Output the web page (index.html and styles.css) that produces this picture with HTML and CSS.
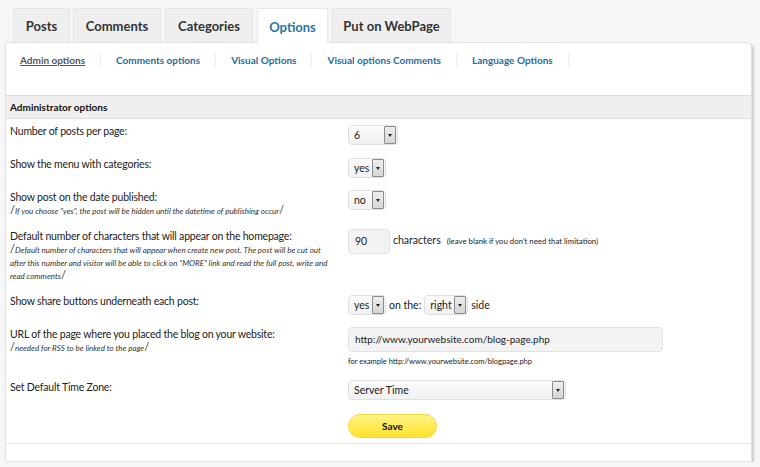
FILE: index.html
```html
<!DOCTYPE html>
<html>
<head>
<meta charset="utf-8">
<link rel="stylesheet" href="styles.css">
</head>
<body>
<div class="wrap">
  <div class="tabs">
    <div class="tab t-posts">Posts</div>
    <div class="tab t-comments">Comments</div>
    <div class="tab t-cats">Categories</div>
    <div class="tab t-opts active">Options</div>
    <div class="tab t-put">Put on WebPage</div>
  </div>
  <div class="panel">
    <div class="subnav">
      <a class="sub current">Admin options</a>
      <a class="sub">Comments options</a>
      <a class="sub">Visual Options</a>
      <a class="sub">Visual options Comments</a>
      <a class="sub">Language Options</a>
    </div>
    <div class="section-head">Administrator options</div>
    <div class="rows">
      <div class="row">
        <div class="label"><div class="ltext">Number of posts per page:</div></div>
        <div class="ctrl"><div class="select w50"><span class="val">6</span><span class="arrow"></span></div></div>
      </div>
      <div class="row">
        <div class="label"><div class="ltext">Show the menu with categories:</div></div>
        <div class="ctrl"><div class="select w38"><span class="val">yes</span><span class="arrow"></span></div></div>
      </div>
      <div class="row tall">
        <div class="label">
          <div class="ltext">Show post on the date published:</div>
          <div class="note"><span class="slash">/</span>If you choose "yes", the post will be hidden until the datetime of publishing occur<span class="slash">/</span></div>
        </div>
        <div class="ctrl c1"><div class="select w38"><span class="val">no</span><span class="arrow"></span></div></div>
      </div>
      <div class="row tall">
        <div class="label">
          <div class="ltext">Default number of characters that will appear on the homepage:</div>
          <div class="note long"><span class="slash">/</span>Default number of characters that will appear when create new post. The post will be cut out after this number and visitor will be able to click on "MORE" link and read the full post, write and read comments<span class="slash">/</span></div>
        </div>
        <div class="ctrl c1 inline">
          <div class="input w42">90</div>
          <span class="after">characters</span>
          <span class="tiny">(leave blank if you don't need that limitation)</span>
        </div>
      </div>
      <div class="row">
        <div class="label"><div class="ltext">Show share buttons underneath each post:</div></div>
        <div class="ctrl inline">
          <div class="select w38"><span class="val">yes</span><span class="arrow"></span></div>
          <span class="mid">on the:</span>
          <div class="select w44"><span class="val">right</span><span class="arrow"></span></div>
          <span class="mid">side</span>
        </div>
      </div>
      <div class="row">
        <div class="label">
          <div class="ltext">URL of the page where you placed the blog on your website:</div>
          <div class="note">
            <span class="slash">/</span>needed for RSS to be linked to the page<span class="slash">/</span></div>
        </div>
        <div class="ctrl c1">
          <div class="input w315 url">http://www.yourwebsite.com/blog-page.php</div>
          <div class="example">for example http://www.yourwebsite.com/blogpage.php</div>
        </div>
      </div>
      <div class="row">
        <div class="label"><div class="ltext">Set Default Time Zone:</div></div>
        <div class="ctrl c1"><div class="select w218"><span class="val">Server Time</span><span class="arrow"></span></div></div>
      </div>
      <div class="row save-row">
        <div class="label"></div>
        <div class="ctrl"><div class="save">Save</div></div>
      </div>
    </div>
    <div class="foot"></div>
  </div>
</div>
</body>
</html>
```
FILE: styles.css
```css
* { box-sizing: border-box; }
html, body { margin: 0; padding: 0; }
body {
  background: #f6f6f6;
  font-family: Lato, "Open Sans", "DejaVu Sans", sans-serif;
  color: #222;
}
.wrap {
  padding: 8px 8px 0 5px;
}
.tabs {
  display: flex;
  gap: 3px;
  padding-left: 8px;
  height: 34px;
  position: relative;
  z-index: 2;
}
.tab {
  height: 34px;
  background: #efefef;
  border: 1px solid #e6e6e6;
  border-bottom: none;
  font-weight: 700;
  font-size: 13px;
  color: #333;
  display: flex;
  align-items: center;
  justify-content: center;
  padding-top: 1px;
}
.t-posts { width: 57px; }
.t-comments { width: 88px; }
.t-cats { width: 88px; margin-left: 1px; }
.t-opts { width: 71px; margin-left: 1px; }
.t-put { width: 119px; margin-left: 1px; }
.tab.active {
  background: #fff;
  color: #1f76a8;
  height: 35px;
  border-color: #e8e8e8;
}
.panel {
  width: 747px;
  height: 420px;
  background: #fff;
  border: 1px solid #e2e2e2;
  border-top-right-radius: 5px;
  box-shadow: 2px 2px 2px #cfcfcf;
  display: flex;
  flex-direction: column;
}
.subnav {
  flex: none;
  display: flex;
  padding-top: 10px;
  height: 52px;
}
.sub {
  font-size: 10px;
  font-weight: 700;
  color: #1f6e9e;
  padding: 0 15px;
  line-height: 14px;
  height: 14px;
  border-right: 1px solid #f0eeee;
}
.sub.current {
  color: #555;
  text-decoration: underline;
  padding-left: 14px;
}
.section-head {
  flex: none;
  height: 24px;
  background: #efefef;
  border-top: 1px solid #dedede;
  border-bottom: 1px solid #dedede;
  font-weight: 700;
  font-size: 10px;
  line-height: 22px;
  padding-left: 4px;
  color: #111;
}
.rows {
  padding-top: 4px;
  flex: 1;
  min-height: 0;
}
.row {
  display: grid;
  grid-template-columns: 338px 1fr;
  padding: 0 0 11px 4px;
}
.row.tall { padding-bottom: 10px; }
.ltext {
  font-size: 10.5px;
  line-height: 16px;
  color: #222;
  letter-spacing: -0.2px;
}
.note {
  font-size: 8px;
  font-style: italic;
  line-height: 13px;
  color: #333;
}
.note.long { width: 328px; }
.note .slash {
  font-size: 11px;
  line-height: 0;
  font-style: normal;
  font-weight: 400;
  color: #333;
}
.ctrl { padding-top: 2px; }
.ctrl.c1 { padding-top: 1px; }
.ctrl.inline {
  display: flex;
  align-items: center;
  align-self: start;
}
.select {
  height: 20px;
  border: 1px solid #e0e0e0;
  border-radius: 4px;
  background: linear-gradient(#fbfbfb, #f1f1f1);
  display: flex;
  align-items: center;
  justify-content: space-between;
  padding: 0 1px 0 5px;
  font-size: 10.5px;
  color: #222;
}
.w50 { width: 50px; }
.w38 { width: 38px; }
.w44 { width: 44px; }
.w218 { width: 218px; }
.arrow {
  width: 12px;
  height: 18px;
  border: 1px solid #8c8c8c;
  border-radius: 1px;
  background: linear-gradient(#ededed, #d6d6d6);
  position: relative;
  flex: none;
}
.arrow::after {
  content: "";
  position: absolute;
  left: 3px;
  top: 7px;
  border-left: 2.5px solid transparent;
  border-right: 2.5px solid transparent;
  border-top: 3px solid #222;
}
.input {
  height: 25px;
  border: 1px solid #e2e2e2;
  border-radius: 4px;
  background: #f3f3f3;
  font-size: 10.5px;
  line-height: 23px;
  padding-left: 6px;
  color: #222;
}
.input.url { font-size: 10px; }
.w42 { width: 42px; }
.w315 { width: 315px; }
.after {
  font-size: 10.5px;
  margin-left: 3px;
  margin-top: -3px;
}
.tiny {
  font-size: 7.8px;
  margin-left: 6px;
  margin-top: -1px;
}
.mid {
  font-size: 10.5px;
  margin: 0 3px;
}
.example {
  font-size: 7.5px;
  margin-top: 4px;
  line-height: 12px;
  color: #222;
}
.save-row { padding-top: 1px; }
.save {
  width: 89px;
  height: 24px;
  border-radius: 12px;
  background: linear-gradient(#fff38a 0%, #ffec5a 45%, #ffe12e 100%);
  border: 1px solid #f3d838;
  font-size: 10px;
  font-weight: 700;
  color: #111;
  display: flex;
  align-items: center;
  justify-content: center;
}
.foot {
  flex: none;
  height: 18px;
  border-top: 1px solid #e8e8e8;
}
```
